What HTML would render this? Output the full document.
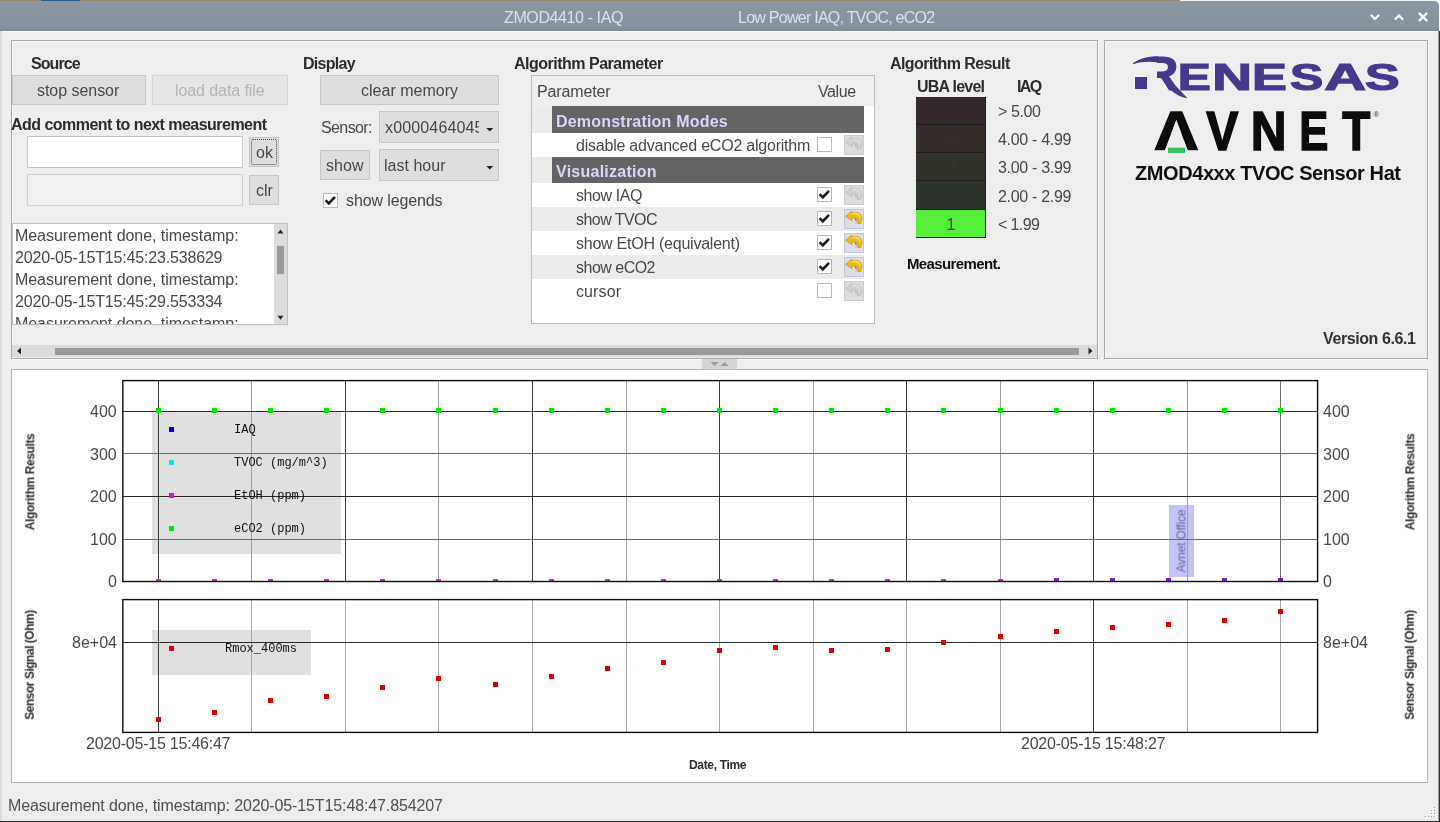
<!DOCTYPE html>
<html><head><meta charset="utf-8"><title>ZMOD4410 - IAQ</title>
<style>
html,body{margin:0;padding:0}
body{width:1440px;height:822px;overflow:hidden;position:relative;background:#eeeeee;font-family:"Liberation Sans",sans-serif;}
.t{position:absolute;line-height:20px;white-space:nowrap;will-change:transform;}
.m{font-family:"Liberation Mono",monospace;}
svg{position:absolute;left:0;top:0;overflow:visible}
</style></head><body>
<div style="position:absolute;left:0px;top:0px;width:1180px;height:1px;box-sizing:border-box;background:#9a866e;"></div>
<div style="position:absolute;left:41px;top:0px;width:39px;height:1px;box-sizing:border-box;background:#2a5c94;"></div>
<div style="position:absolute;left:1180px;top:0px;width:260px;height:1px;box-sizing:border-box;background:#f4f4f4;"></div>
<div style="position:absolute;left:1438px;top:0px;width:2px;height:32px;box-sizing:border-box;background:#f8f8f8;"></div>
<div style="position:absolute;left:0px;top:1px;width:1439px;height:30px;box-sizing:border-box;background:linear-gradient(#8a97a3,#86929d 85%,#7e8a95);border-radius:0 5px 0 0;"></div>
<div style="position:absolute;left:2px;top:31px;width:1436px;height:1px;box-sizing:border-box;background:#f8f8f8;"></div>
<div class="t" style="left:503.8px;top:8.00px;font-size:16px;letter-spacing:-0.390px;color:#dde2e8;">ZMOD4410 - IAQ</div>
<div class="t" style="left:737.5px;top:8.00px;font-size:16px;letter-spacing:-0.737px;color:#dde2e8;">Low Power IAQ, TVOC, eCO2</div>
<svg width="1440" height="32"><g fill="none" stroke="#ffffff" stroke-width="2.2" stroke-linecap="round" stroke-linejoin="round"><path d="M1371.500 15.500l3.500 3.500 3.500-3.500"/><path d="M1395.500 19l3.500-3.500 3.500 3.500"/><path d="M1419.5 13.5l7 7m0-7l-7 7"/></g></svg>
<div style="position:absolute;left:0px;top:31px;width:2px;height:790px;box-sizing:border-box;background:#dcdcdc;"></div>
<div style="position:absolute;left:1438px;top:31px;width:1px;height:791px;box-sizing:border-box;background:#a0a0a0;"></div>
<div style="position:absolute;left:1439px;top:31px;width:1px;height:791px;box-sizing:border-box;background:#303030;"></div>
<div style="position:absolute;left:0px;top:821px;width:1440px;height:1px;box-sizing:border-box;background:#2a2a2a;"></div>
<div style="position:absolute;left:11px;top:40px;width:1087px;height:319px;box-sizing:border-box;border:1px solid #a8a8a8;box-shadow:inset 1px 1px 0 #fafafa, 1px 1px 0 #fafafa;"></div>
<div style="position:absolute;left:1104px;top:40px;width:324px;height:319px;box-sizing:border-box;border:1px solid #a8a8a8;box-shadow:inset 1px 1px 0 #fafafa, 1px 1px 0 #fafafa;"></div>
<div style="position:absolute;left:11px;top:369px;width:1417px;height:414px;box-sizing:border-box;background:#ffffff;border:1px solid #b4b4b4;"></div>
<div class="t" style="left:30.6px;top:54.00px;font-size:16px;font-weight:bold;letter-spacing:-0.928px;color:#2c2c2c;">Source</div>
<div style="position:absolute;left:12px;top:75px;width:134px;height:30px;box-sizing:border-box;background:#dedede;border:1px solid #c6c6c6;"></div>
<div class="t" style="left:36.9px;top:81.00px;font-size:16px;letter-spacing:-0.041px;color:#484848;">stop sensor</div>
<div style="position:absolute;left:152px;top:75px;width:136px;height:30px;box-sizing:border-box;background:#e6e6e6;border:1px solid #d2d2d2;"></div>
<div class="t" style="left:175.0px;top:81.00px;font-size:16px;letter-spacing:-0.087px;color:#b4b4b4;">load data file</div>
<div class="t" style="left:11.0px;top:115.00px;font-size:16px;font-weight:bold;letter-spacing:-0.535px;color:#2c2c2c;">Add comment to next measurement</div>
<div style="position:absolute;left:27px;top:136px;width:216px;height:32px;box-sizing:border-box;background:#ffffff;border:1px solid #c8c8c8;"></div>
<div style="position:absolute;left:249px;top:137px;width:30px;height:30px;box-sizing:border-box;background:#dedede;border:1px solid #c6c6c6;"><div style="position:absolute;left:1px;top:1px;right:1px;bottom:1px;border:1px dotted #444;border-radius:2px"></div></div>
<div class="t" style="left:255.5px;top:143.00px;font-size:16px;color:#484848;">ok</div>
<div style="position:absolute;left:27px;top:174px;width:216px;height:32px;box-sizing:border-box;background:#f0f0f0;border:1px solid #d0d0d0;"></div>
<div style="position:absolute;left:249px;top:175px;width:30px;height:30px;box-sizing:border-box;background:#dedede;border:1px solid #c6c6c6;"></div>
<div class="t" style="left:255.5px;top:181.00px;font-size:16px;color:#484848;">clr</div>
<div style="position:absolute;left:12px;top:223px;width:276px;height:102px;box-sizing:border-box;background:#ffffff;border:1px solid #c0c0c0;overflow:hidden;"></div>
<div style="position:absolute;left:13px;top:224px;width:261px;height:100px;overflow:hidden">
<div class="t" style="left:2.3px;top:2.00px;font-size:16px;letter-spacing:-0.051px;color:#484848;">Measurement done, timestamp:</div>
<div class="t" style="left:2.3px;top:24.00px;font-size:16px;letter-spacing:-0.169px;color:#484848;">2020-05-15T15:45:23.538629</div>
<div class="t" style="left:2.3px;top:46.00px;font-size:16px;letter-spacing:-0.051px;color:#484848;">Measurement done, timestamp:</div>
<div class="t" style="left:2.3px;top:68.00px;font-size:16px;letter-spacing:-0.169px;color:#484848;">2020-05-15T15:45:29.553334</div>
<div class="t" style="left:2.3px;top:90.00px;font-size:16px;letter-spacing:-0.051px;color:#484848;">Measurement done, timestamp:</div>
</div>
<div style="position:absolute;left:274px;top:224px;width:13px;height:100px;box-sizing:border-box;background:#dcdcdc;"></div>
<div style="position:absolute;left:277px;top:246px;width:7px;height:28px;box-sizing:border-box;background:#9a9a9a;"></div>
<svg width="1440" height="822"><path d="M277.5 233.5l3-4 3 4z M277.500 315.700l3 4 3-4z" fill="#222"/></svg>
<div style="position:absolute;left:12px;top:345px;width:1085px;height:12px;box-sizing:border-box;background:#dcdcdc;"></div>
<div style="position:absolute;left:55px;top:348px;width:1024px;height:7px;box-sizing:border-box;background:#9a9a9a;"></div>
<svg width="1440" height="822"><path d="M21 347.5l-4 3.5 4 3.5z M1088.5 347.5l4 3.5-4 3.5z" fill="#222"/></svg>
<div style="position:absolute;left:702px;top:359px;width:35px;height:10px;box-sizing:border-box;background:#d4d4d4;"></div>
<svg width="1440" height="822"><path d="M710.500 362h8l-4 4z M720.500 366h8l-4-4z" fill="#9c9c9c"/></svg>
<div class="t" style="left:303.4px;top:54.00px;font-size:16px;font-weight:bold;letter-spacing:-0.718px;color:#2c2c2c;">Display</div>
<div style="position:absolute;left:320px;top:75px;width:179px;height:30px;box-sizing:border-box;background:#dedede;border:1px solid #c6c6c6;"></div>
<div class="t" style="left:361.0px;top:81.00px;font-size:16px;letter-spacing:0.009px;color:#484848;">clear memory</div>
<div class="t" style="left:320.5px;top:118.00px;font-size:16px;letter-spacing:-0.606px;color:#484848;">Sensor:</div>
<div style="position:absolute;left:379px;top:111px;width:120px;height:32px;box-sizing:border-box;background:#dedede;border:1px solid #c6c6c6;"></div>
<div style="position:absolute;left:384px;top:112px;width:95px;height:31px;overflow:hidden">
<div class="t" style="left:0.5px;top:6.00px;font-size:16px;letter-spacing:0.153px;color:#484848;">x0000464045</div>
</div>
<div style="position:absolute;left:320px;top:150px;width:50px;height:30px;box-sizing:border-box;background:#dedede;border:1px solid #c6c6c6;"></div>
<div class="t" style="left:326.0px;top:156.00px;font-size:16px;letter-spacing:0.050px;color:#484848;">show</div>
<div style="position:absolute;left:379px;top:149px;width:120px;height:32px;box-sizing:border-box;background:#dedede;border:1px solid #c6c6c6;"></div>
<div class="t" style="left:384.0px;top:156.00px;font-size:16px;letter-spacing:0.017px;color:#484848;">last hour</div>
<svg width="1440" height="822"><path d="M486.300 128h7l-3.500 3.600z M486.300 166h7l-3.500 3.600z" fill="#222"/></svg>
<div style="position:absolute;left:323px;top:193px;width:15px;height:15px;box-sizing:border-box;background:#fff;border:1px solid #b8b8b8;"></div>
<svg width="1440" height="822"><path d="M325.6 200.2l3.2 3.2 6.2-6.6" fill="none" stroke="#1c1c1c" stroke-width="2.6"/></svg>
<div class="t" style="left:346.0px;top:191.00px;font-size:16px;letter-spacing:-0.113px;color:#484848;">show legends</div>
<div class="t" style="left:514.2px;top:54.00px;font-size:16px;font-weight:bold;letter-spacing:-0.503px;color:#2c2c2c;">Algorithm Parameter</div>
<div style="position:absolute;left:531px;top:75px;width:344px;height:249px;box-sizing:border-box;background:#ffffff;border:1px solid #bdbdbd;"></div>
<div style="position:absolute;left:532px;top:76px;width:342px;height:30px;box-sizing:border-box;background:#efefef;"></div>
<div class="t" style="left:536.8px;top:82.00px;font-size:16px;letter-spacing:-0.149px;color:#484848;">Parameter</div>
<div class="t" style="left:818.3px;top:82.00px;font-size:16px;letter-spacing:-0.383px;color:#484848;">Value</div>
<div style="position:absolute;left:532px;top:106px;width:20px;height:27px;box-sizing:border-box;background:#ececec;"></div>
<div style="position:absolute;left:552px;top:106px;width:312px;height:27px;box-sizing:border-box;background:#646464;"></div>
<div class="t" style="left:555.9px;top:112.00px;font-size:16px;font-weight:bold;letter-spacing:0.205px;color:#dcd4fa;">Demonstration Modes</div>
<div style="position:absolute;left:532px;top:157px;width:20px;height:26px;box-sizing:border-box;background:#ececec;"></div>
<div style="position:absolute;left:552px;top:157px;width:312px;height:26px;box-sizing:border-box;background:#646464;"></div>
<div class="t" style="left:555.9px;top:162.00px;font-size:16px;font-weight:bold;letter-spacing:0.250px;color:#dcd4fa;">Visualization</div>
<div style="position:absolute;left:532px;top:207px;width:332px;height:24px;box-sizing:border-box;background:#ececec;"></div>
<div style="position:absolute;left:532px;top:255px;width:332px;height:24px;box-sizing:border-box;background:#ececec;"></div>
<div class="t" style="left:575.5px;top:136.00px;font-size:16px;letter-spacing:-0.224px;color:#484848;">disable advanced eCO2 algorithm</div>
<div style="position:absolute;left:817px;top:137px;width:15px;height:15px;box-sizing:border-box;background:#fff;border:1px solid #b8b8b8;"></div>
<div style="position:absolute;left:844px;top:135px;width:20px;height:20px;box-sizing:border-box;background:#dcdcdc;border:1px solid #cccccc;"></div>
<svg style="left:844px;top:135px" width="20" height="20" viewBox="0 0 20 20"><path d="M1.6 7.3L7.6 2.2L7.7 3.900C12.500 2.600 17.900 4.200 17.900 9.200C17.900 11.500 17.200 13.400 16 14.900L12.900 13.900C13.700 12.500 13.900 11 13.200 9.900C12.300 8.600 10.400 8.500 7.800 8.900L8 11.600Z" fill="#d2d2d2" stroke="#b8b8b8" stroke-width="0.7" stroke-linejoin="round"/><path d="M8.200 4.600C11.500 3.900 15.800 4.800 16.400 8.400" fill="none" stroke="#e2e2e2" stroke-width="1.2" stroke-linecap="round"/><path d="M10.800 9.600C12 10 12.300 10.900 11.900 12.100" fill="none" stroke="#b0b0b0" stroke-width="1.1"/></svg>
<div class="t" style="left:575.5px;top:186.00px;font-size:16px;letter-spacing:-0.408px;color:#484848;">show IAQ</div>
<div style="position:absolute;left:817px;top:187px;width:15px;height:15px;box-sizing:border-box;background:#fff;border:1px solid #b8b8b8;"></div>
<svg width="1440" height="822"><path d="M819.6 194.2l3.2 3.2 6.2-6.6" fill="none" stroke="#1c1c1c" stroke-width="2.6"/></svg>
<div style="position:absolute;left:844px;top:185px;width:20px;height:20px;box-sizing:border-box;background:#dcdcdc;border:1px solid #cccccc;"></div>
<svg style="left:844px;top:185px" width="20" height="20" viewBox="0 0 20 20"><path d="M1.6 7.3L7.6 2.2L7.7 3.900C12.500 2.600 17.900 4.200 17.900 9.200C17.900 11.500 17.200 13.400 16 14.900L12.900 13.900C13.700 12.500 13.900 11 13.200 9.900C12.300 8.600 10.400 8.500 7.800 8.900L8 11.600Z" fill="#d2d2d2" stroke="#b8b8b8" stroke-width="0.7" stroke-linejoin="round"/><path d="M8.200 4.600C11.500 3.900 15.800 4.800 16.400 8.400" fill="none" stroke="#e2e2e2" stroke-width="1.2" stroke-linecap="round"/><path d="M10.800 9.600C12 10 12.300 10.900 11.900 12.100" fill="none" stroke="#b0b0b0" stroke-width="1.1"/></svg>
<div class="t" style="left:575.5px;top:210.00px;font-size:16px;letter-spacing:-0.556px;color:#484848;">show TVOC</div>
<div style="position:absolute;left:817px;top:211px;width:15px;height:15px;box-sizing:border-box;background:#fff;border:1px solid #b8b8b8;"></div>
<svg width="1440" height="822"><path d="M819.6 218.2l3.2 3.2 6.2-6.6" fill="none" stroke="#1c1c1c" stroke-width="2.6"/></svg>
<div style="position:absolute;left:844px;top:209px;width:20px;height:20px;box-sizing:border-box;background:#dcdce2;border:1px solid #bcc8dc;"></div>
<svg style="left:844px;top:209px" width="20" height="20" viewBox="0 0 20 20"><path d="M1.6 7.3L7.6 2.2L7.7 3.900C12.500 2.600 17.900 4.200 17.900 9.200C17.900 11.500 17.200 13.400 16 14.900L12.900 13.900C13.700 12.500 13.900 11 13.200 9.900C12.300 8.600 10.400 8.500 7.800 8.900L8 11.600Z" fill="#f0bc14" stroke="#c08c08" stroke-width="0.7" stroke-linejoin="round"/><path d="M8.200 4.600C11.500 3.900 15.800 4.800 16.400 8.400" fill="none" stroke="#fae478" stroke-width="1.2" stroke-linecap="round"/><path d="M10.800 9.600C12 10 12.300 10.900 11.900 12.100" fill="none" stroke="#8a6a30" stroke-width="1.1"/></svg>
<div class="t" style="left:575.5px;top:234.00px;font-size:16px;letter-spacing:-0.236px;color:#484848;">show EtOH (equivalent)</div>
<div style="position:absolute;left:817px;top:235px;width:15px;height:15px;box-sizing:border-box;background:#fff;border:1px solid #b8b8b8;"></div>
<svg width="1440" height="822"><path d="M819.6 242.2l3.2 3.2 6.2-6.6" fill="none" stroke="#1c1c1c" stroke-width="2.6"/></svg>
<div style="position:absolute;left:844px;top:233px;width:20px;height:20px;box-sizing:border-box;background:#dcdce2;border:1px solid #bcc8dc;"></div>
<svg style="left:844px;top:233px" width="20" height="20" viewBox="0 0 20 20"><path d="M1.6 7.3L7.6 2.2L7.7 3.900C12.500 2.600 17.900 4.200 17.900 9.200C17.900 11.500 17.200 13.400 16 14.900L12.900 13.900C13.700 12.500 13.900 11 13.200 9.900C12.300 8.600 10.400 8.500 7.800 8.900L8 11.600Z" fill="#f0bc14" stroke="#c08c08" stroke-width="0.7" stroke-linejoin="round"/><path d="M8.200 4.600C11.500 3.900 15.800 4.800 16.400 8.400" fill="none" stroke="#fae478" stroke-width="1.2" stroke-linecap="round"/><path d="M10.800 9.600C12 10 12.300 10.900 11.900 12.100" fill="none" stroke="#8a6a30" stroke-width="1.1"/></svg>
<div class="t" style="left:575.5px;top:258.00px;font-size:16px;letter-spacing:-0.511px;color:#484848;">show eCO2</div>
<div style="position:absolute;left:817px;top:259px;width:15px;height:15px;box-sizing:border-box;background:#fff;border:1px solid #b8b8b8;"></div>
<svg width="1440" height="822"><path d="M819.6 266.2l3.2 3.2 6.2-6.6" fill="none" stroke="#1c1c1c" stroke-width="2.6"/></svg>
<div style="position:absolute;left:844px;top:257px;width:20px;height:20px;box-sizing:border-box;background:#dcdce2;border:1px solid #bcc8dc;"></div>
<svg style="left:844px;top:257px" width="20" height="20" viewBox="0 0 20 20"><path d="M1.6 7.3L7.6 2.2L7.7 3.900C12.500 2.600 17.900 4.200 17.900 9.200C17.900 11.500 17.200 13.400 16 14.900L12.900 13.900C13.700 12.500 13.900 11 13.200 9.900C12.300 8.600 10.400 8.500 7.800 8.900L8 11.600Z" fill="#f0bc14" stroke="#c08c08" stroke-width="0.7" stroke-linejoin="round"/><path d="M8.200 4.600C11.500 3.900 15.800 4.800 16.400 8.400" fill="none" stroke="#fae478" stroke-width="1.2" stroke-linecap="round"/><path d="M10.800 9.600C12 10 12.300 10.900 11.900 12.100" fill="none" stroke="#8a6a30" stroke-width="1.1"/></svg>
<div class="t" style="left:575.5px;top:282.00px;font-size:16px;letter-spacing:0.110px;color:#484848;">cursor</div>
<div style="position:absolute;left:817px;top:283px;width:15px;height:15px;box-sizing:border-box;background:#fff;border:1px solid #b8b8b8;"></div>
<div style="position:absolute;left:844px;top:281px;width:20px;height:20px;box-sizing:border-box;background:#dcdcdc;border:1px solid #cccccc;"></div>
<svg style="left:844px;top:281px" width="20" height="20" viewBox="0 0 20 20"><path d="M1.6 7.3L7.6 2.2L7.7 3.900C12.500 2.600 17.900 4.200 17.900 9.200C17.900 11.500 17.200 13.400 16 14.900L12.900 13.900C13.700 12.500 13.900 11 13.200 9.900C12.300 8.600 10.400 8.500 7.800 8.900L8 11.600Z" fill="#d2d2d2" stroke="#b8b8b8" stroke-width="0.7" stroke-linejoin="round"/><path d="M8.200 4.600C11.500 3.900 15.800 4.800 16.400 8.400" fill="none" stroke="#e2e2e2" stroke-width="1.2" stroke-linecap="round"/><path d="M10.800 9.600C12 10 12.300 10.900 11.900 12.100" fill="none" stroke="#b0b0b0" stroke-width="1.1"/></svg>
<div class="t" style="left:890.2px;top:54.00px;font-size:16px;font-weight:bold;letter-spacing:-0.579px;color:#2c2c2c;">Algorithm Result</div>
<div class="t" style="left:916.5px;top:77.00px;font-size:16px;font-weight:bold;letter-spacing:-0.762px;color:#2c2c2c;">UBA level</div>
<div class="t" style="left:1016.6px;top:77.00px;font-size:16px;font-weight:bold;letter-spacing:-1.672px;color:#2c2c2c;">IAQ</div>
<div style="position:absolute;left:916px;top:97px;width:70px;height:28px;box-sizing:border-box;background:#35292c;border-bottom:1.5px solid #1c1c1c;border-right:1.5px solid #1c1c1c;"></div>
<div class="t" style="left:997.6px;top:102.00px;font-size:16px;letter-spacing:-0.406px;color:#484848;">&gt; 5.00</div>
<div class="t" style="left:950.5px;width:0;display:flex;justify-content:center;top:102.00px;font-size:16px;color:#3a2e31;"><span>5</span></div>
<div style="position:absolute;left:916px;top:125px;width:70px;height:28px;box-sizing:border-box;background:#352e2b;border-bottom:1.5px solid #1c1c1c;border-right:1.5px solid #1c1c1c;"></div>
<div class="t" style="left:997.6px;top:130.00px;font-size:16px;letter-spacing:-0.299px;color:#484848;">4.00 - 4.99</div>
<div class="t" style="left:950.5px;width:0;display:flex;justify-content:center;top:130.00px;font-size:16px;color:#3a322f;"><span>4</span></div>
<div style="position:absolute;left:916px;top:153px;width:70px;height:28px;box-sizing:border-box;background:#33322a;border-bottom:1.5px solid #1c1c1c;border-right:1.5px solid #1c1c1c;"></div>
<div class="t" style="left:997.6px;top:158.00px;font-size:16px;letter-spacing:-0.299px;color:#484848;">3.00 - 3.99</div>
<div class="t" style="left:950.5px;width:0;display:flex;justify-content:center;top:158.00px;font-size:16px;color:#38372f;"><span>3</span></div>
<div style="position:absolute;left:916px;top:181px;width:70px;height:28.5px;box-sizing:border-box;background:#2d342b;border-bottom:1.5px solid #1c1c1c;border-right:1.5px solid #1c1c1c;"></div>
<div class="t" style="left:997.6px;top:187.00px;font-size:16px;letter-spacing:-0.299px;color:#484848;">2.00 - 2.99</div>
<div class="t" style="left:950.5px;width:0;display:flex;justify-content:center;top:187.00px;font-size:16px;color:#333a31;"><span>2</span></div>
<div style="position:absolute;left:916px;top:209.5px;width:70px;height:28.5px;box-sizing:border-box;background:#55ee3b;border-bottom:1.5px solid #1c1c1c;border-right:1.5px solid #1c1c1c;"></div>
<div class="t" style="left:997.6px;top:215.00px;font-size:16px;letter-spacing:-0.606px;color:#484848;">&lt; 1.99</div>
<div class="t" style="left:950.5px;width:0;display:flex;justify-content:center;top:215.00px;font-size:16px;color:#2a5a20;"><span>1</span></div>
<div class="t" style="left:907.0px;top:254.00px;font-size:15px;font-weight:bold;letter-spacing:-0.624px;color:#101010;">Measurement.</div>
<div class="t" style="left:1322.5px;top:329.00px;font-size:16px;font-weight:bold;letter-spacing:-0.402px;color:#333333;">Version 6.6.1</div>
<div class="t" style="left:1134.9px;top:163.00px;font-size:20px;font-weight:bold;letter-spacing:-0.418px;color:#101010;">ZMOD4xxx TVOC Sensor Hat</div>
<svg width="1440" height="822" shape-rendering="crispEdges" font-family="Liberation Sans, sans-serif"><rect x="152" y="412" width="189" height="142" fill="#e0e0e0"/><rect x="152" y="630" width="159" height="45" fill="#e0e0e0"/><rect x="1169" y="505" width="25" height="72" fill="#c4c4f4"/><path d="M158.5 381V581" stroke="#3c3c3c" stroke-width="1"/><path d="M158.5 600V732" stroke="#3c3c3c" stroke-width="1"/><path d="M251.5 381V581" stroke="#9c9c9c" stroke-width="1"/><path d="M251.5 600V732" stroke="#a8a8a8" stroke-width="1"/><path d="M345.5 381V581" stroke="#3c3c3c" stroke-width="1"/><path d="M345.5 600V732" stroke="#a8a8a8" stroke-width="1"/><path d="M438.5 381V581" stroke="#9c9c9c" stroke-width="1"/><path d="M438.5 600V732" stroke="#a8a8a8" stroke-width="1"/><path d="M532.5 381V581" stroke="#3c3c3c" stroke-width="1"/><path d="M532.5 600V732" stroke="#a8a8a8" stroke-width="1"/><path d="M626.5 381V581" stroke="#9c9c9c" stroke-width="1"/><path d="M626.5 600V732" stroke="#a8a8a8" stroke-width="1"/><path d="M719.5 381V581" stroke="#3c3c3c" stroke-width="1"/><path d="M719.5 600V732" stroke="#a8a8a8" stroke-width="1"/><path d="M813.5 381V581" stroke="#9c9c9c" stroke-width="1"/><path d="M813.5 600V732" stroke="#a8a8a8" stroke-width="1"/><path d="M906.5 381V581" stroke="#3c3c3c" stroke-width="1"/><path d="M906.5 600V732" stroke="#a8a8a8" stroke-width="1"/><path d="M1000.5 381V581" stroke="#9c9c9c" stroke-width="1"/><path d="M1000.5 600V732" stroke="#a8a8a8" stroke-width="1"/><path d="M1093.5 381V581" stroke="#3c3c3c" stroke-width="1"/><path d="M1093.5 600V732" stroke="#3c3c3c" stroke-width="1"/><path d="M1187.5 381V581" stroke="#9c9c9c" stroke-width="1"/><path d="M1187.5 600V732" stroke="#a8a8a8" stroke-width="1"/><path d="M1280.5 381V581" stroke="#6c6c6c" stroke-width="1"/><path d="M1280.5 600V732" stroke="#a8a8a8" stroke-width="1"/><path d="M123 411.5H1317" stroke="#2a2a2a" stroke-width="1"/><path d="M123 453.5H1317" stroke="#6a6a6a" stroke-width="1"/><path d="M123 496.5H1317" stroke="#2a2a2a" stroke-width="1"/><path d="M123 539.5H1317" stroke="#6a6a6a" stroke-width="1"/><path d="M123 642.5H1317" stroke="#2a2a2a" stroke-width="1"/><rect x="156" y="408" width="5" height="5" fill="#00e800"/><rect x="156" y="579" width="5" height="2" fill="#d428d4"/><rect x="212" y="408" width="5" height="5" fill="#00e800"/><rect x="212" y="579" width="5" height="2" fill="#d428d4"/><rect x="268" y="408" width="5" height="5" fill="#00e800"/><rect x="268" y="579" width="5" height="2" fill="#d428d4"/><rect x="324" y="408" width="5" height="5" fill="#00e800"/><rect x="324" y="579" width="5" height="2" fill="#d428d4"/><rect x="380" y="408" width="5" height="5" fill="#00e800"/><rect x="380" y="579" width="5" height="2" fill="#d428d4"/><rect x="436" y="408" width="5" height="5" fill="#00e800"/><rect x="436" y="579" width="5" height="2" fill="#d428d4"/><rect x="493" y="408" width="5" height="5" fill="#00e800"/><rect x="493" y="579" width="5" height="2" fill="#d428d4"/><rect x="549" y="408" width="5" height="5" fill="#00e800"/><rect x="549" y="579" width="5" height="2" fill="#d428d4"/><rect x="605" y="408" width="5" height="5" fill="#00e800"/><rect x="605" y="579" width="5" height="2" fill="#d428d4"/><rect x="661" y="408" width="5" height="5" fill="#00e800"/><rect x="661" y="579" width="5" height="2" fill="#d428d4"/><rect x="717" y="408" width="5" height="5" fill="#00e800"/><rect x="717" y="579" width="5" height="2" fill="#d428d4"/><rect x="773" y="408" width="5" height="5" fill="#00e800"/><rect x="773" y="579" width="5" height="2" fill="#d428d4"/><rect x="829" y="408" width="5" height="5" fill="#00e800"/><rect x="829" y="579" width="5" height="2" fill="#d428d4"/><rect x="885" y="408" width="5" height="5" fill="#00e800"/><rect x="885" y="579" width="5" height="2" fill="#d428d4"/><rect x="941" y="408" width="5" height="5" fill="#00e800"/><rect x="941" y="579" width="5" height="2" fill="#d428d4"/><rect x="998" y="408" width="5" height="5" fill="#00e800"/><rect x="998" y="579" width="5" height="2" fill="#d428d4"/><rect x="1054" y="408" width="5" height="5" fill="#00e800"/><rect x="1054" y="578" width="5" height="3" fill="#8a14c8"/><rect x="1110" y="408" width="5" height="5" fill="#00e800"/><rect x="1110" y="578" width="5" height="3" fill="#8a14c8"/><rect x="1166" y="408" width="5" height="5" fill="#00e800"/><rect x="1166" y="578" width="5" height="3" fill="#8a14c8"/><rect x="1222" y="408" width="5" height="5" fill="#00e800"/><rect x="1222" y="578" width="5" height="3" fill="#8a14c8"/><rect x="1278" y="408" width="5" height="5" fill="#00e800"/><rect x="1278" y="578" width="5" height="3" fill="#8a14c8"/><rect x="156" y="717" width="5" height="5" fill="#e00000"/><rect x="212" y="710" width="5" height="5" fill="#e00000"/><rect x="268" y="698" width="5" height="5" fill="#e00000"/><rect x="324" y="694" width="5" height="5" fill="#e00000"/><rect x="380" y="685" width="5" height="5" fill="#e00000"/><rect x="436" y="676" width="5" height="5" fill="#e00000"/><rect x="493" y="682" width="5" height="5" fill="#e00000"/><rect x="549" y="674" width="5" height="5" fill="#e00000"/><rect x="605" y="666" width="5" height="5" fill="#e00000"/><rect x="661" y="660" width="5" height="5" fill="#e00000"/><rect x="717" y="648" width="5" height="5" fill="#e00000"/><rect x="773" y="645" width="5" height="5" fill="#e00000"/><rect x="829" y="648" width="5" height="5" fill="#e00000"/><rect x="885" y="647" width="5" height="5" fill="#e00000"/><rect x="941" y="640" width="5" height="5" fill="#e00000"/><rect x="998" y="634" width="5" height="5" fill="#e00000"/><rect x="1054" y="629" width="5" height="5" fill="#e00000"/><rect x="1110" y="625" width="5" height="5" fill="#e00000"/><rect x="1166" y="622" width="5" height="5" fill="#e00000"/><rect x="1222" y="618" width="5" height="5" fill="#e00000"/><rect x="1278" y="609" width="5" height="5" fill="#e00000"/><rect x="169" y="427" width="5" height="5" fill="#0000e0"/><rect x="169" y="460" width="5" height="5" fill="#00e4f0"/><rect x="169" y="493" width="5" height="5" fill="#e800e8"/><rect x="169" y="526" width="5" height="5" fill="#00e800"/><rect x="169" y="646" width="5" height="5" fill="#e00000"/><rect x="122.800" y="380.600" width="1194.800" height="200.900" fill="none" stroke="#0c0c0c" stroke-width="1.4" shape-rendering="geometricPrecision"/><rect x="122.800" y="599.600" width="1194.800" height="132.800" fill="none" stroke="#0c0c0c" stroke-width="1.4" shape-rendering="geometricPrecision"/></svg>
<div class="t" style="left:233.8px;top:420.00px;font-size:12px;color:#101010;font-family:'Liberation Mono',monospace;">IAQ</div>
<div class="t" style="left:233.8px;top:453.00px;font-size:12px;color:#101010;font-family:'Liberation Mono',monospace;">TVOC (mg/m^3)</div>
<div class="t" style="left:233.8px;top:486.00px;font-size:12px;color:#101010;font-family:'Liberation Mono',monospace;">EtOH (ppm)</div>
<div class="t" style="left:233.8px;top:519.00px;font-size:12px;color:#101010;font-family:'Liberation Mono',monospace;">eCO2 (ppm)</div>
<div class="t" style="left:224.8px;top:639.00px;font-size:12px;color:#101010;font-family:'Liberation Mono',monospace;">Rmox_400ms</div>
<div class="t" style="right:1323.3px;top:402.00px;font-size:16px;color:#484848;">400</div>
<div class="t" style="left:1323.0px;top:402.00px;font-size:16px;color:#484848;">400</div>
<div class="t" style="right:1323.3px;top:445.00px;font-size:16px;color:#484848;">300</div>
<div class="t" style="left:1323.0px;top:445.00px;font-size:16px;color:#484848;">300</div>
<div class="t" style="right:1323.3px;top:487.00px;font-size:16px;color:#484848;">200</div>
<div class="t" style="left:1323.0px;top:487.00px;font-size:16px;color:#484848;">200</div>
<div class="t" style="right:1323.3px;top:530.00px;font-size:16px;color:#484848;">100</div>
<div class="t" style="left:1323.0px;top:530.00px;font-size:16px;color:#484848;">100</div>
<div class="t" style="right:1323.3px;top:572.00px;font-size:16px;color:#484848;">0</div>
<div class="t" style="left:1323.0px;top:572.00px;font-size:16px;color:#484848;">0</div>
<div class="t" style="right:1323.3px;top:633.00px;font-size:16px;color:#484848;">8e+04</div>
<div class="t" style="left:1323.0px;top:633.00px;font-size:16px;color:#484848;">8e+04</div>
<div class="t" style="left:86.3px;top:734.00px;font-size:16px;letter-spacing:-0.225px;color:#484848;">2020-05-15 15:46:47</div>
<div class="t" style="left:1020.5px;top:734.00px;font-size:16px;letter-spacing:-0.225px;color:#484848;">2020-05-15 15:48:27</div>
<div class="t" style="left:689.4px;top:755.00px;font-size:12px;font-weight:bold;letter-spacing:-0.329px;color:#2c2c2c;">Date, Time</div>
<div class="t" style="left:30px;top:481.5px;width:0;height:0;display:flex;align-items:center;justify-content:center;font-size:12px;font-weight:bold;letter-spacing:-0.396px;color:#2c2c2c"><span style="transform:rotate(-90deg);display:block">Algorithm Results</span></div>
<div class="t" style="left:1409.5px;top:481.5px;width:0;height:0;display:flex;align-items:center;justify-content:center;font-size:12px;font-weight:bold;letter-spacing:-0.396px;color:#2c2c2c"><span style="transform:rotate(-90deg);display:block">Algorithm Results</span></div>
<div class="t" style="left:30px;top:665px;width:0;height:0;display:flex;align-items:center;justify-content:center;font-size:12px;font-weight:bold;letter-spacing:-0.482px;color:#2c2c2c"><span style="transform:rotate(-90deg);display:block">Sensor Signal (Ohm)</span></div>
<div class="t" style="left:1409.5px;top:665px;width:0;height:0;display:flex;align-items:center;justify-content:center;font-size:12px;font-weight:bold;letter-spacing:-0.482px;color:#2c2c2c"><span style="transform:rotate(-90deg);display:block">Sensor Signal (Ohm)</span></div>
<div class="t" style="left:1181px;top:541px;width:0;height:0;display:flex;align-items:center;justify-content:center;font-size:12px;letter-spacing:-0.175px;color:#6468a4"><span style="transform:rotate(-90deg);display:block">Avnet Office</span></div>
<div class="t" style="left:8.3px;top:796.00px;font-size:16px;letter-spacing:-0.114px;color:#505050;">Measurement done, timestamp: 2020-05-15T15:48:47.854207</div>
<svg width="1440" height="822"><text font-family="Liberation Sans, sans-serif" font-weight="bold" fill="#48388c" stroke="#48388c" stroke-width="1.2"><tspan x="1142.76" y="89.90" font-size="48.11" textLength="35.74" lengthAdjust="spacingAndGlyphs">R</tspan><tspan x="1177.75" y="89.90" font-size="36.19" textLength="33.11" lengthAdjust="spacingAndGlyphs">E</tspan><tspan x="1212.39" y="89.90" font-size="36.19" textLength="39.70" lengthAdjust="spacingAndGlyphs">N</tspan><tspan x="1252.07" y="89.90" font-size="36.19" textLength="34.90" lengthAdjust="spacingAndGlyphs">E</tspan><tspan x="1290.10" y="89.90" font-size="36.19" textLength="33.27" lengthAdjust="spacingAndGlyphs">S</tspan><tspan x="1324.15" y="89.90" font-size="36.19" textLength="41.82" lengthAdjust="spacingAndGlyphs">A</tspan><tspan x="1365.04" y="89.90" font-size="36.19" textLength="34.61" lengthAdjust="spacingAndGlyphs">S</tspan></text><rect x="1140" y="50" width="17" height="45" fill="#eeeeee"/><path d="M1132.8 63.2C1139 58.800 1148 56.200 1158 56.200V62.400C1149 61.200 1140 61.800 1133.500 64.200Z" fill="#48388c"/><path d="M1173 83L1187.500 98.300C1180.500 97.200 1173 93.500 1167.600 86.500Z" fill="#48388c"/><rect x="1135" y="77" width="12" height="12" fill="#48388c"/><text font-family="Liberation Sans, sans-serif" font-weight="bold" fill="#0c0c0c" stroke="#0c0c0c" stroke-width="1.6"><tspan x="1153.74" y="149.50" font-size="56.25" textLength="45.16" lengthAdjust="spacingAndGlyphs">A</tspan><tspan x="1206.24" y="149.50" font-size="56.25" textLength="32.10" lengthAdjust="spacingAndGlyphs">V</tspan><tspan x="1250.66" y="149.50" font-size="56.25" textLength="35.77" lengthAdjust="spacingAndGlyphs">N</tspan><tspan x="1299.16" y="149.50" font-size="56.25" textLength="29.06" lengthAdjust="spacingAndGlyphs">E</tspan><tspan x="1342.34" y="149.50" font-size="56.25" textLength="28.06" lengthAdjust="spacingAndGlyphs">T</tspan></text><path d="M1164.36 151.75L1176.28 120.01L1188.21 151.75Z" fill="#eeeeee"/><rect x="1150" y="150.300" width="52" height="3" fill="#eeeeee"/><rect x="1168" y="147.700" width="17" height="5.300" fill="#3cbe68"/><text x="1373.500" y="116.500" font-family="Liberation Sans, sans-serif" font-size="7.500" fill="#222">®</text></svg>
<svg width="1440" height="822" shape-rendering="crispEdges"><rect x="1426" y="817" width="1" height="1" fill="#ffffff"/><rect x="1425" y="816" width="1" height="1" fill="#9a9a9a"/><rect x="1429" y="817" width="1" height="1" fill="#ffffff"/><rect x="1428" y="816" width="1" height="1" fill="#9a9a9a"/><rect x="1432" y="817" width="1" height="1" fill="#ffffff"/><rect x="1431" y="816" width="1" height="1" fill="#9a9a9a"/><rect x="1435" y="817" width="1" height="1" fill="#ffffff"/><rect x="1434" y="816" width="1" height="1" fill="#9a9a9a"/><rect x="1432" y="814" width="1" height="1" fill="#ffffff"/><rect x="1431" y="813" width="1" height="1" fill="#9a9a9a"/><rect x="1435" y="814" width="1" height="1" fill="#ffffff"/><rect x="1434" y="813" width="1" height="1" fill="#9a9a9a"/><rect x="1432" y="811" width="1" height="1" fill="#ffffff"/><rect x="1431" y="810" width="1" height="1" fill="#9a9a9a"/><rect x="1435" y="811" width="1" height="1" fill="#ffffff"/><rect x="1434" y="810" width="1" height="1" fill="#9a9a9a"/><rect x="1435" y="808" width="1" height="1" fill="#ffffff"/><rect x="1434" y="807" width="1" height="1" fill="#9a9a9a"/></svg>
</body></html>
